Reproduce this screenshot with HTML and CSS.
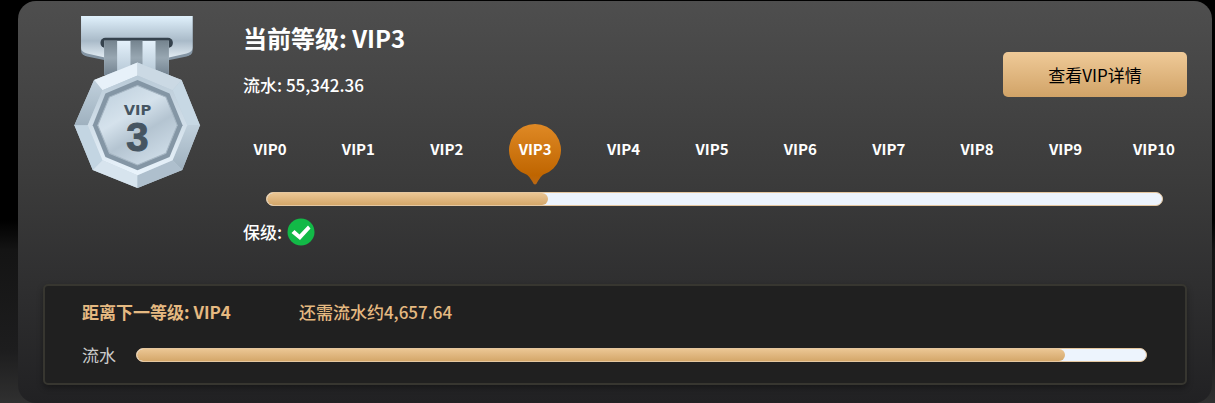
FILE: index.html
```html
<!DOCTYPE html>
<html lang="zh-CN">
<head>
<meta charset="utf-8">
<meta name="viewport" content="width=device-width, initial-scale=1">
<title>VIP</title>
<link rel="stylesheet" href="styles.css">
</head>
<body>
<main class="card">
  <section class="level">
    <svg class="medal" viewBox="42 48 380 518" role="img" aria-label="VIP 3">
      <defs>
        <linearGradient id="plate" x1="0" y1="0" x2="0" y2="1"><stop offset="0" stop-color="#e0f1fc"/><stop offset=".6" stop-color="#a9bac8"/><stop offset="1" stop-color="#e1ebf2"/></linearGradient>
        <linearGradient id="light" x1="0" y1="0" x2="0" y2="1"><stop offset="0" stop-color="#e4f1fb"/><stop offset="1" stop-color="#b4c6d4"/></linearGradient>
        <linearGradient id="dark" x1="0" y1="0" x2="0" y2="1"><stop offset="0" stop-color="#75848f"/><stop offset=".5" stop-color="#98a7b2"/><stop offset="1" stop-color="#738391"/></linearGradient>
        <linearGradient id="bevel" x1="0" y1="0" x2="0" y2="1"><stop offset="0" stop-color="#b9cad7"/><stop offset="1" stop-color="#eaf4fc"/></linearGradient>
        <linearGradient id="face" x1=".2" y1="0" x2=".8" y2="1"><stop offset="0" stop-color="#c0d1de"/><stop offset=".35" stop-color="#d5e2ec"/><stop offset=".6" stop-color="#b4c4d1"/><stop offset="1" stop-color="#d2e0eb"/></linearGradient>
        <linearGradient id="side" x1="0" y1="0" x2="0" y2="1"><stop offset="0" stop-color="#c0d0dc"/><stop offset="1" stop-color="#9fb1bf"/></linearGradient>
      </defs>
      <path d="M63 48H397V151Q397 164 379 169L328 180H132L81 169Q63 164 63 151Z" fill="#8495a4"/>
      <path d="M63 48H397V143Q397 156 379 160L326 172H134L81 160Q63 156 63 143Z" fill="url(#plate)"/>
      <rect x="121" y="113" width="217" height="31" rx="15" fill="#35424d"/>
      <path d="M132 122H326V225H132Z" fill="url(#light)"/>
      <path d="M132 122H171V225H132ZM211 122H247V225H211ZM286 122H326V225H286Z" fill="url(#dark)"/>
      <path d="M232 187L364 240L419 375L366 509L232 563L98 509L43 375L102 240Z" fill="#bdcdd9"/>
      <path d="M232 187L102 240L127 270L232 226Z" fill="#e7f1f9"/>
      <path d="M232 187L364 240L337 270L232 226Z" fill="#cbd9e4"/>
      <path d="M102 240L43 375H83L127 270Z" fill="url(#side)"/>
      <path d="M364 240L419 375H381L337 270Z" fill="#c7d8e4"/>
      <path d="M43 375L98 509L127 480L83 375Z" fill="#c3d5e2"/>
      <path d="M419 375L366 509L337 480L381 375Z" fill="url(#side)"/>
      <path d="M98 509L232 563V525L127 480Z" fill="#d7e4ee"/>
      <path d="M366 509L232 563V525L337 480Z" fill="#aebfcd"/>
      <path d="M232 226L337 270L381 375L337 480L232 525L127 480L83 375L127 270Z" fill="url(#bevel)"/>
      <path d="M232 240L328 280L367 375L328 470L232 510L136 470L98 375L136 280Z" fill="#8496a5"/>
      <path d="M232 256L317 291L351 375L317 459L232 494L148 459L113 375L148 291Z" fill="url(#face)" stroke="#a8b8c5" stroke-width="3"/>
      <text class="medal-word" x="232" y="343" text-anchor="middle">VIP</text>
      <text class="medal-number" x="232" y="453" text-anchor="middle">3</text>
    </svg>
    <div class="details">
      <header class="heading">
        <div class="summary">
          <h1 class="title">当前等级: VIP3</h1>
          <p class="turnover">流水: 55,342.36</p>
        </div>
        <button class="more" type="button">查看VIP详情</button>
      </header>
      <ol class="steps">
        <li class="step">VIP0</li>
        <li class="step">VIP1</li>
        <li class="step">VIP2</li>
        <li class="step current" aria-current="step">
          <svg class="pin" viewBox="0 0 52 61" aria-hidden="true">
            <defs><linearGradient id="pin" x1="0" y1="0" x2="0" y2="1"><stop offset="0" stop-color="#df8925"/><stop offset=".85" stop-color="#bf6500"/><stop offset="1" stop-color="#bb6815"/></linearGradient></defs>
            <path d="M18 50.750A26 26 0 1 1 34 50.750Q31 53 29 57Q26 64 23 57Q21 53 18 50.750Z" fill="url(#pin)"/>
          </svg>
          <span class="step-name">VIP3</span>
        </li>
        <li class="step">VIP4</li>
        <li class="step">VIP5</li>
        <li class="step">VIP6</li>
        <li class="step">VIP7</li>
        <li class="step">VIP8</li>
        <li class="step">VIP9</li>
        <li class="step">VIP10</li>
      </ol>
      <div class="bar level-bar"><div class="fill" style="width:31.4%"></div></div>
      <div class="keep">
        <span>保级:</span>
        <svg class="check" viewBox="0 0 28 28" role="img" aria-label="已保级"><circle cx="14" cy="14" r="13.5" fill="#12b947"/><path d="M4.500 15L7.500 12L12.500 16.500L21 7.500L23.500 10.500L13 22Z" fill="#fff"/></svg>
      </div>
    </div>
  </section>
  <section class="next">
    <div class="next-heading">
      <h2 class="next-title">距离下一等级: VIP4</h2>
      <p class="remaining">还需流水约4,657.64</p>
    </div>
    <div class="next-progress">
      <span>流水</span>
      <div class="bar next-bar"><div class="fill" style="width:92%"></div></div>
    </div>
  </section>
</main>
</body>
</html>
```
FILE: styles.css
```css
* { box-sizing: border-box; }
html { background: #000; }
body {
  margin: 0;
  padding: 1px 3px 0 18px;
  background: linear-gradient(#000 220px, #141414 250px, #1d1d1e 350px, #303030 403px);
  color: #fff;
  font: 17px/24px "Noto Sans CJK SC", sans-serif;
}
h1, h2, p, ol { margin: 0; padding: 0; }
.card {
  padding: 15px 25px 18px;
  border-radius: 18px;
  background: linear-gradient(#4e4e4e, #3b3b3b 45%, #212123);
}
.level { display: flex; gap: 42px; padding-left: 31px; }
.medal { flex: none; width: 127px; height: 173px; }
.medal-word { font: bold 44px "DejaVu Sans", sans-serif; fill: #465562; }
.medal-number { font: bold 120px "Liberation Sans", sans-serif; fill: #465562; stroke: #465562; stroke-width: 3px; }
.details { flex: 1; min-width: 0; }
.heading { display: flex; justify-content: space-between; align-items: flex-end; }
.title { font-size: 24px; line-height: 36px; margin-top: 4px; }
.turnover { margin: 17px 0 0; font-weight: 500; }
.more {
  width: 184px;
  height: 45px;
  border: 0;
  border-radius: 5px;
  background: linear-gradient(#efca98, #d1a367);
  color: #000;
  font: inherit;
}
.steps { display: flex; justify-content: space-between; margin: 27px 7px 0 1px; list-style: none; }
.step {
  position: relative;
  width: 52px;
  height: 61px;
  font-size: 15px;
  font-weight: 700;
  line-height: 50px;
  text-align: center;
}
.pin { position: absolute; inset: 0; width: 52px; height: 61px; }
.step-name { position: relative; }
.bar {
  height: 14px;
  overflow: hidden;
  border: 1px solid #e5c7a0;
  border-radius: 7px;
  background: #edf4fd;
}
.fill { height: 100%; border-radius: 6px; background: linear-gradient(#ebc694, #d4a76a); }
.level-bar { margin: 7px 24px 0 23px; }
.keep { display: flex; align-items: center; gap: 5px; margin-top: 12px; font-weight: 500; }
.check { width: 28px; height: 28px; }
.next {
  margin-top: 38px;
  padding: 14px 38px 16px 37px;
  border: 2px solid #373630;
  border-radius: 5px;
  background: #202020;
  box-shadow: 0 3px 6px #0005;
}
.next-heading { display: flex; gap: 68px; color: #e5b981; }
.next-title { font-size: 17px; line-height: 24px; }
.remaining { font-weight: 500; }
.next-progress { display: flex; align-items: center; gap: 20px; margin-top: 19px; color: #cbcbcb; }
.next-bar { flex: 1; }
```
